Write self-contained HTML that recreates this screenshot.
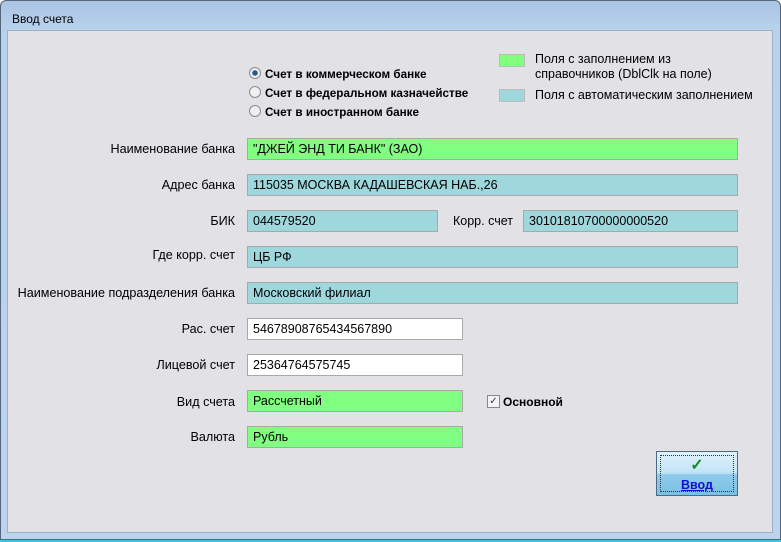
<!DOCTYPE html><html><head><meta charset="utf-8"><style>
body{margin:0;width:781px;height:542px;overflow:hidden;font-family:"Liberation Sans",Arial,sans-serif;font-size:12.5px;background:#fff}
.frame{position:absolute;left:0;top:0;width:781px;height:540px;background:linear-gradient(#a9c4e4,#b9d2ec 30px,#bcd4ee);border-radius:6px 6px 0 0;border:1px solid #56657a;box-sizing:border-box}
.title{position:absolute;left:11px;top:11px;font-size:12px;color:#000}
.content{position:absolute;left:7px;top:30px;width:766px;height:503px;background:#e1e1e6;border:1px solid #9cb0c8;box-sizing:border-box}
.bl{position:absolute;left:0;top:540px;width:781px;height:2px;background:#4fb7e0}
.l{position:absolute;text-align:right;right:546px;color:#000;font-size:12.6px;white-space:nowrap}
.f{position:absolute;height:22px;box-sizing:border-box;border:1px solid #a8a8a8;padding:3px 5px;font-size:12.5px;white-space:nowrap}
.g{background:#80ff80}.t{background:#9ed8dc}.w{background:#fff}
.r{position:absolute;left:249px;font-weight:bold;font-size:11.7px}
.r i{display:inline-block;width:10px;height:10px;border:1px solid #8a8a8a;border-radius:50%;background:#f0f0f0;vertical-align:-1px;margin-right:4px;position:relative}
.sw{position:absolute;left:499px;width:24px;height:11px;border:1px solid #bbb}
</style></head><body>
<div class="frame"><div class="title">Ввод счета</div></div>
<div class="content"></div>
<div class="bl"></div>
<div class="r" style="top:67px"><i style="background:radial-gradient(circle,#2a5a8a 2.5px,#f0f0f0 3px)"></i>Счет в коммерческом банке</div>
<div class="r" style="top:86px"><i></i>Счет в федеральном казначействе</div>
<div class="r" style="top:105px"><i></i>Счет в иностранном банке</div>
<div class="sw" style="top:54px;background:#80ff80"></div>
<div class="sw" style="top:89px;background:#9ed8dc"></div>
<div style="position:absolute;left:535px;top:52px;line-height:15px">Поля с заполнением из<br>справочников (DblClk на поле)</div>
<div style="position:absolute;left:535px;top:88px">Поля с автоматическим заполнением</div>

<div class="l" style="top:142px">Наименование банка</div><div class="f g" style="left:247px;top:138px;width:491px">"ДЖЕЙ ЭНД ТИ БАНК" (ЗАО)</div>
<div class="l" style="top:178px">Адрес банка</div><div class="f t" style="left:247px;top:174px;width:491px">115035 МОСКВА КАДАШЕВСКАЯ НАБ.,26</div>
<div class="l" style="top:214px">БИК</div><div class="f t" style="left:247px;top:210px;width:191px">044579520</div>
<div style="position:absolute;left:453px;top:214px">Корр. счет</div><div class="f t" style="left:523px;top:210px;width:215px">30101810700000000520</div>
<div class="l" style="top:248px">Где корр. счет</div><div class="f t" style="left:247px;top:246px;width:491px">ЦБ РФ</div>
<div class="l" style="top:286px">Наименование подразделения банка</div><div class="f t" style="left:247px;top:282px;width:491px">Московский филиал</div>
<div class="l" style="top:322px">Рас. счет</div><div class="f w" style="left:247px;top:318px;width:216px">54678908765434567890</div>
<div class="l" style="top:358px">Лицевой счет</div><div class="f w" style="left:247px;top:354px;width:216px">25364764575745</div>
<div class="l" style="top:395px">Вид счета</div><div class="f g" style="left:247px;top:390px;width:216px">Рассчетный</div>
<div class="l" style="top:430px">Валюта</div><div class="f g" style="left:247px;top:426px;width:216px">Рубль</div>
<div style="position:absolute;left:487px;top:395px;width:11px;height:11px;border:1px solid #888;background:#f4f4f4;font-size:10px;line-height:11px;text-align:center;color:#335">✓</div>
<div style="position:absolute;left:503px;top:395px;font-weight:bold;font-size:12px">Основной</div>
<div style="position:absolute;left:656px;top:451px;width:82px;height:45px;box-sizing:border-box;border:1px solid #4a6a8a;background:linear-gradient(#e0f2fc,#bfe4f6 50%,#8fcbea 52%,#7cc0e4)">
<div style="position:absolute;left:3px;top:3px;right:3px;bottom:3px;border:1px dotted #333"></div>
<div style="position:absolute;left:0;right:0;top:3px;text-align:center;color:#1a8a2a;font-weight:bold;font-size:16px">✓</div>
<div style="position:absolute;left:0;right:0;top:26px;text-align:center;color:#1010d0;font-weight:bold;font-size:12.5px;text-decoration:underline">Ввод</div></div>
</body></html>
